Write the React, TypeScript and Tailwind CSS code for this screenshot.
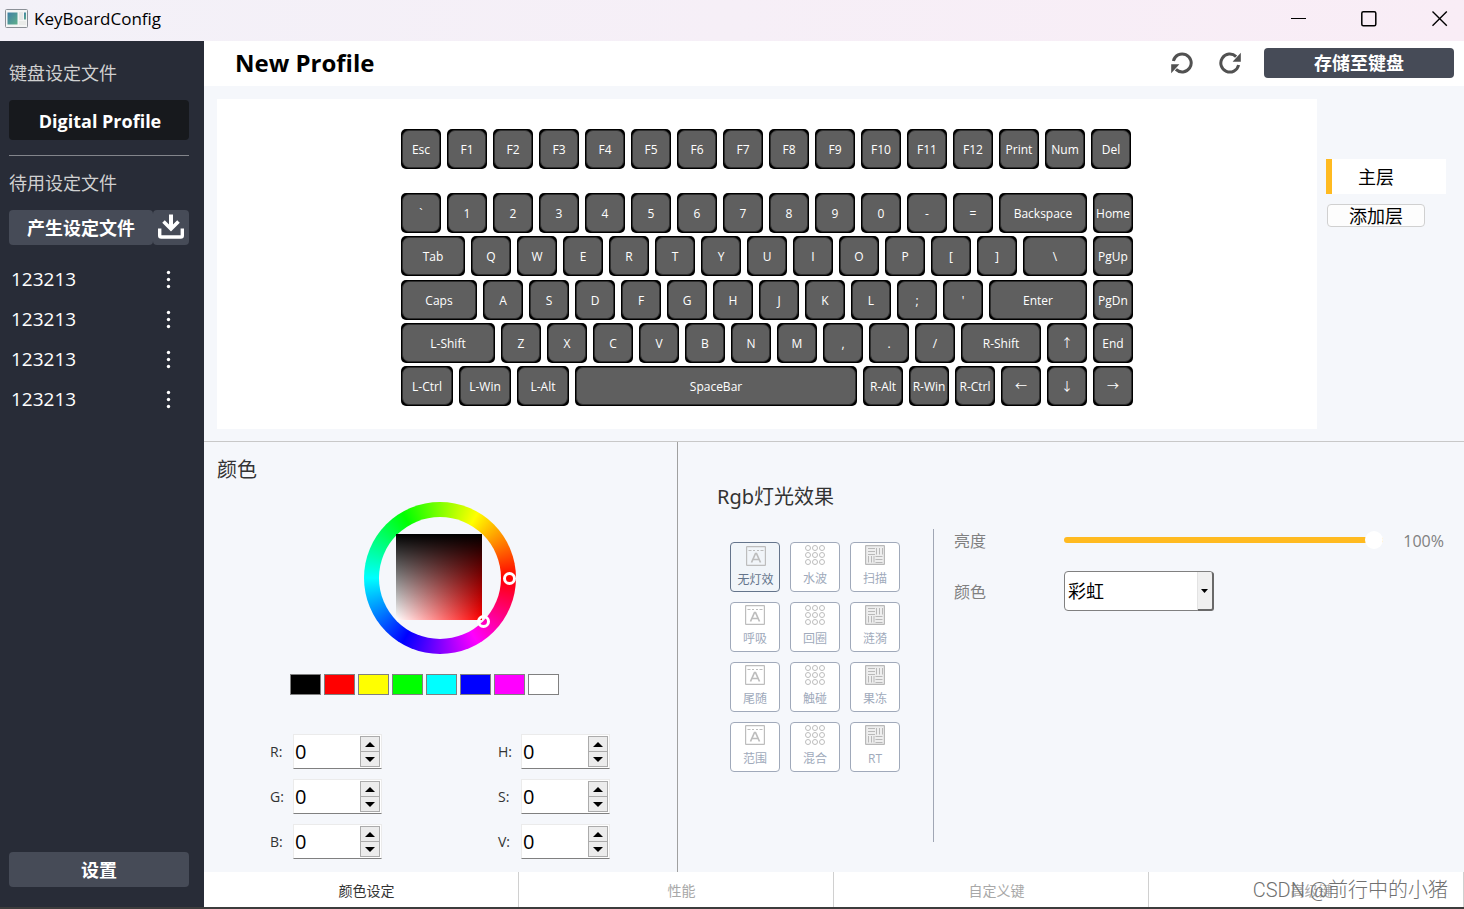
import { useState } from "react";

type KeyDef = [label: string, width?: string];

const functionRow: KeyDef[] = [
  ["Esc"], ["F1"], ["F2"], ["F3"], ["F4"], ["F5"], ["F6"], ["F7"], ["F8"], ["F9"],
  ["F10"], ["F11"], ["F12"], ["Print"], ["Num"], ["Del"],
];

const mainRows: KeyDef[][] = [
  [["`"], ["1"], ["2"], ["3"], ["4"], ["5"], ["6"], ["7"], ["8"], ["9"], ["0"], ["-"], ["="], ["Backspace", "w-[88px]"], ["Home"]],
  [["Tab", "w-16"], ["Q"], ["W"], ["E"], ["R"], ["T"], ["Y"], ["U"], ["I"], ["O"], ["P"], ["["], ["]"], ["\\", "w-16"], ["PgUp"]],
  [["Caps", "w-[76px]"], ["A"], ["S"], ["D"], ["F"], ["G"], ["H"], ["J"], ["K"], ["L"], [";"], ["'"], ["Enter", "w-[98px]"], ["PgDn"]],
  [["L-Shift", "w-[94px]"], ["Z"], ["X"], ["C"], ["V"], ["B"], ["N"], ["M"], [","], ["."], ["/"], ["R-Shift", "w-20"], ["↑"], ["End"]],
  [["L-Ctrl", "w-[52px]"], ["L-Win", "w-[52px]"], ["L-Alt", "w-[52px]"], ["SpaceBar", "w-[282px]"], ["R-Alt"], ["R-Win"], ["R-Ctrl"], ["←"], ["↓"], ["→"]],
];

const swatches = [
  ["黑", "bg-black"], ["红", "bg-[#ff0000]"], ["黄", "bg-[#ffff00]"], ["绿", "bg-[#00ff00]"],
  ["青", "bg-[#00ffff]"], ["蓝", "bg-[#0000ff]"], ["紫", "bg-[#ff00ff]"], ["白", "bg-white"],
];

const effects = ["无灯效", "水波", "扫描", "呼吸", "回圈", "涟漪", "尾随", "触碰", "果冻", "范围", "混合", "RT"];
const tabs = ["颜色设定", "性能", "自定义键", "高级键"];

function KeyRow({ keys }: { keys: KeyDef[] }) {
  return (
    <div className="flex gap-1.5">
      {keys.map(([label, width]) => (
        <button key={label} type="button" className={`h-10 shrink-0 rounded-[5px] bg-black p-px ${width ?? "w-10"}`}>
          <span className="flex h-full items-center justify-center rounded-[7px] border border-[#2e2e2e] bg-[#5f5f5f] pt-0.5 text-xs whitespace-nowrap text-white">
            {label}
          </span>
        </button>
      ))}
    </div>
  );
}

function AppIcon() {
  return (
    <svg width="23" height="19" viewBox="0 0 23 19" aria-hidden="true">
      <defs>
        <linearGradient id="pane" x1="0" y1="0" x2="1" y2="1">
          <stop offset="0" stopColor="#3f7fa6" />
          <stop offset="1" stopColor="#5fb08a" />
        </linearGradient>
      </defs>
      <rect x="0.5" y="0.5" width="22" height="18" rx="1" fill="#f4f5f5" stroke="#8b9097" />
      <rect x="2.5" y="3.5" width="10" height="12" fill="url(#pane)" />
      <rect x="14" y="3" width="4" height="8" fill="#e6e8e6" />
      <rect x="19" y="3.500" width="2" height="7" fill="url(#pane)" />
      <rect x="14" y="12" width="7" height="4" fill="#e9ebe9" />
    </svg>
  );
}

function RotateIcon({ back }: { back?: boolean }) {
  return (
    <svg width="22" height="22" viewBox="0 0 22 22" aria-hidden="true">
      <g transform={back ? "rotate(180 11 11)" : undefined}>
        <path d="M17.100 4.600A9 9 0 1 0 19.600 13" fill="none" stroke="#515151" strokeWidth="3" />
        <path d="M21.800 0.800V9.800H13.600z" fill="#515151" />
      </g>
    </svg>
  );
}

function EffectIcon({ kind }: { kind: number }) {
  if (kind === 0) {
    return (
      <svg width="20" height="20" viewBox="0 0 20 20" fill="none" stroke="#bdbdbd" aria-hidden="true">
        <rect x="0.6" y="0.6" width="18.800" height="18.800" rx="0.5" strokeWidth="1.200" />
        <path d="M2.500 4.500H5.500M7 4.500H9M11 4.500H13M14.500 4.500H17.500" />
        <path d="M5.500 16.500L9.500 7.500H10.500L14.500 16.500M7 13.500H13" strokeWidth="1.700" />
      </svg>
    );
  }
  if (kind === 1) {
    return (
      <svg width="20" height="20" viewBox="0 0 20 20" fill="none" stroke="#bdbdbd" aria-hidden="true">
        {[3, 10, 17].map((y) => [3, 10, 17].map((x) => <circle key={`${x}-${y}`} cx={x} cy={y} r="2.500" />))}
      </svg>
    );
  }
  return (
    <svg width="20" height="20" viewBox="0 0 20 20" fill="none" stroke="#b9b9b9" aria-hidden="true">
      <rect x="0.6" y="0.6" width="18.800" height="18.800" rx="0.5" fill="#eeeeee" strokeWidth="1.200" />
      <path d="M3 3.500H10M3 6.500H10M3 9.500H10M11.500 3V9.500M14.500 3V9.500M17.500 3V9.500M3.500 11V17.500M6.500 11V17.500M9 11V17.500M10.500 11.500H17.500M10.500 14.500H17.500M10.500 17.500H17.500" />
    </svg>
  );
}

function SpinField({ label }: { label: string }) {
  const [value, setValue] = useState(0);
  const id = `channel-${label}`;
  return (
    <div className="flex items-center">
      <label htmlFor={id} className="w-[23px] pt-px text-sm text-[#333]">{label}:</label>
      <div className="flex h-[35px] w-[89px] border border-[#ebebeb] border-b-[#808080] bg-white">
        <input
          id={id}
          type="number"
          value={value}
          onChange={(e) => setValue(Number(e.target.value))}
          className="min-w-0 flex-1 [appearance:textfield] bg-transparent pl-px text-xl text-black outline-none [&::-webkit-inner-spin-button]:appearance-none"
        />
        <div className="m-px flex w-5 shrink-0 flex-col divide-y divide-[#ababab] border border-[#ababab] bg-[#ececec]">
          <button type="button" aria-label={`${label} +`} onClick={() => setValue(value + 1)} className="flex flex-1 items-center justify-center">
            <svg width="10" height="5" viewBox="0 0 10 5" aria-hidden="true"><path d="M0 5L5 0L10 5z" /></svg>
          </button>
          <button type="button" aria-label={`${label} -`} onClick={() => setValue(Math.max(0, value - 1))} className="flex flex-1 items-center justify-center">
            <svg width="10" height="5" viewBox="0 0 10 5" aria-hidden="true"><path d="M0 0L5 5L10 0z" /></svg>
          </button>
        </div>
      </div>
    </div>
  );
}

function TitleBar() {
  return (
    <header className="flex h-[41px] shrink-0 items-center bg-linear-to-r from-[#f3f1f8] to-[#f9edf6] pr-4 pb-1 pl-[5px]">
      <AppIcon />
      <span className="ml-1.5 flex-1 text-[17px] text-black">KeyBoardConfig</span>
      <div className="flex gap-[54px] text-black">
        <button type="button" aria-label="最小化">
          <svg width="16" height="16" viewBox="0 0 16 16" stroke="currentColor" aria-hidden="true"><path d="M0 7.500H15" /></svg>
        </button>
        <button type="button" aria-label="最大化" className="pr-px">
          <svg width="16" height="16" viewBox="0 0 16 16" fill="none" stroke="currentColor" strokeWidth="1.500" aria-hidden="true"><rect x="0.800" y="0.800" width="14" height="14" rx="1.500" /></svg>
        </button>
        <button type="button" aria-label="关闭">
          <svg width="16" height="16" viewBox="0 0 16 16" stroke="currentColor" strokeWidth="1.400" aria-hidden="true"><path d="M0.500 0.500L14.800 14.800M14.800 0.500L0.500 14.800" /></svg>
        </button>
      </div>
    </header>
  );
}

function Sidebar() {
  return (
    <aside className="flex w-[204px] shrink-0 flex-col bg-[#282c37] pt-[18px] pr-[15px] pb-5 pl-[9px] text-lg text-white">
      <h2 className="h-7 leading-7 text-[#d0d0d0]">键盘设定文件</h2>
      <button type="button" className="mt-[13px] h-10 rounded-[4px] bg-[#17191d] pt-0.5 pl-0.5 font-bold">
        Digital Profile
      </button>
      <hr className="mt-[15px] border-[#83858b]" />
      <h2 className="mt-[13px] h-7 leading-7 text-[#d0d0d0]">待用设定文件</h2>
      <div className="mt-[13px] flex h-[35px]">
        <button type="button" className="flex-1 rounded-[4px] bg-[#464b57] font-bold">产生设定文件</button>
        <button type="button" aria-label="导入" className="flex w-9 items-center justify-center rounded-[4px] bg-[#464b57] pb-0.5">
          <svg width="26" height="25" viewBox="0 0 26 25" fill="none" stroke="#fff" aria-hidden="true">
            <path d="M13 0.500V14" strokeWidth="4" />
            <path d="M5.500 7.500L13 15L20.500 7.500" strokeWidth="3.600" />
            <path d="M1.700 14.500V21.500Q1.700 23 3.200 23H22.800Q24.300 23 24.300 21.500V14.500" strokeWidth="3.400" />
          </svg>
        </button>
      </div>
      <ul className="mt-[15px] flex-1 text-[19px]">
        {[1, 2, 3, 4].map((n) => (
          <li key={n} className="flex h-10 items-center justify-between pr-[18px] pl-0.5">
            <span>123213</span>
            <button type="button" aria-label="更多">
              <svg width="5" height="20" viewBox="0 0 5 20" fill="#fff" aria-hidden="true">
                <circle cx="2.500" cy="2.500" r="1.700" /><circle cx="2.500" cy="9.500" r="1.700" /><circle cx="2.500" cy="16.500" r="1.700" />
              </svg>
            </button>
          </li>
        ))}
      </ul>
      <button type="button" className="h-[35px] rounded-[4px] bg-[#464b57] font-bold">设置</button>
    </aside>
  );
}

function ColorPanel() {
  return (
    <section className="w-[474px] shrink-0 border-r border-[#a0a0a0] pt-[13px]">
      <h2 className="h-[30px] pl-[13px] text-xl leading-[30px] text-[#333]">颜色</h2>
      <div className="relative mt-[17px] ml-40 flex size-[152px] items-center justify-center rounded-full bg-[conic-gradient(from_90deg,#f00,#f0f,#00f,#0ff,#0f0,#ff0,#f00)]">
        <div className="flex size-[122px] items-center justify-center rounded-full bg-[#f5f7fb] pr-0.5 pb-0.5">
          <div className="size-[86px] bg-[linear-gradient(to_bottom,#000,transparent),linear-gradient(to_right,#fff,#f00)]" />
        </div>
        <span className="absolute top-[70px] left-[139px] size-[13px] rounded-full border-[3px] border-white" />
        <span className="absolute top-[113px] left-[113px] size-[13px] rounded-full border-[3px] border-white" />
      </div>
      <div className="mt-5 flex gap-[3px] pl-[86px]">
        {swatches.map(([name, color]) => (
          <button key={name} type="button" aria-label={name} className={`h-[21px] w-[31px] border border-[#808080] ${color}`} />
        ))}
      </div>
      <div className="mt-[39px] grid grid-cols-[228px_auto] gap-y-2.5 pl-[66px]">
        {["R", "H", "G", "S", "B", "V"].map((c) => <SpinField key={c} label={c} />)}
      </div>
    </section>
  );
}

function EffectPanel() {
  const [selected, setSelected] = useState(0);
  const [level, setLevel] = useState(100);
  return (
    <section className="min-w-0 flex-1 pt-10 pr-5 pl-[39px]">
      <h2 className="h-[30px] font-['Noto_Sans','Noto_Sans_CJK_SC',sans-serif] text-xl leading-[30px] text-[#333]">Rgb灯光效果</h2>
      <div className="mt-[17px] flex">
        <div className="grid h-fit grid-cols-3 gap-2.5 pt-[13px] pr-[33px] pl-[13px]">
          {effects.map((name, i) => (
            <button
              key={name}
              type="button"
              onClick={() => setSelected(i)}
              className={`flex size-[50px] flex-col items-center rounded-[4px] border text-xs ${
                i === selected ? "border-[#64748b] bg-[#f1f5f9] pt-[3px] pl-px text-[#64748b]" : "border-[#a0a9ba] bg-white pt-0.5 text-[#a0aabb]"
              }`}
            >
              <EffectIcon kind={i % 3} />
              <span className="mt-1.5 leading-4 whitespace-nowrap">{name}</span>
            </button>
          ))}
        </div>
        <div className="flex h-[313px] min-w-0 flex-1 flex-col border-l border-[#a0a6b4] pl-5 text-base text-[#808080]">
          <div className="flex h-6 items-center">
            <label htmlFor="brightness" className="w-[110px] shrink-0">亮度</label>
            <input
              id="brightness"
              type="range"
              value={level}
              onChange={(e) => setLevel(Number(e.target.value))}
              className="mb-0.5 min-w-0 flex-1 appearance-none bg-transparent [&::-webkit-slider-runnable-track]:h-1.5 [&::-webkit-slider-runnable-track]:rounded-full [&::-webkit-slider-runnable-track]:bg-[#ffba20] [&::-webkit-slider-thumb]:-mt-1.5 [&::-webkit-slider-thumb]:size-[18px] [&::-webkit-slider-thumb]:appearance-none [&::-webkit-slider-thumb]:rounded-full [&::-webkit-slider-thumb]:bg-white"
            />
            <output className="w-[61px] shrink-0 text-right">{level}%</output>
          </div>
          <div className="mt-[18px] flex h-10 items-center">
            <label htmlFor="effect-color" className="w-[110px] shrink-0 pt-0.5">颜色</label>
            <div className="relative h-10 w-[150px]">
              <select id="effect-color" className="size-full appearance-none rounded-[4px] border border-[#808080] bg-white pl-[3px] text-lg text-black">
                <option>彩虹</option>
              </select>
              <span className="pointer-events-none absolute top-px right-0 bottom-0 flex w-[17px] items-center justify-center rounded-r-[3px] border-r-2 border-b-2 border-l border-r-[#696969] border-b-[#696969] border-l-[#e3e3e3] bg-[#f0f0f0] pr-0.5">
                <svg width="7" height="4" viewBox="0 0 7 4" aria-hidden="true"><path d="M0 0H7L3.500 4z" /></svg>
              </span>
            </div>
          </div>
        </div>
      </div>
    </section>
  );
}

export default function App() {
  const [tab, setTab] = useState(0);
  return (
    <div className="flex min-h-screen flex-col bg-[#f5f7fb] font-['Open_Sans','Noto_Sans_CJK_SC',sans-serif]">
      <TitleBar />
      <div className="flex flex-1">
        <Sidebar />
        <main className="flex min-w-0 flex-1 flex-col">
          <div className="flex h-[45px] items-center bg-white pr-2.5 pb-px pl-[31px]">
            <h1 className="flex-1 text-2xl font-bold text-black">New Profile</h1>
            <button type="button" aria-label="撤销" className="mr-[26px]"><RotateIcon back /></button>
            <button type="button" aria-label="重做" className="mr-[23px]"><RotateIcon /></button>
            <button type="button" className="h-[30px] w-[190px] rounded-[4px] bg-[#464b57] text-lg leading-[30px] font-bold text-white">存储至键盘</button>
          </div>

          <div className="flex border-b border-[#c8c8c8] pt-[13px] pb-3 pl-[13px]">
            <div className="flex h-[330px] flex-1 flex-col items-center bg-white pt-[30px]">
              <div className="w-[732px]">
                <KeyRow keys={functionRow} />
                <div className="mt-6 flex h-[213px] flex-col justify-between">
                  {mainRows.map((row) => <KeyRow key={row[0][0]} keys={row} />)}
                </div>
              </div>
            </div>
            <div className="flex w-[147px] shrink-0 flex-col items-start pt-[60px] pl-[9px] text-lg text-black">
              <button type="button" className="h-[35px] w-[120px] border-l-[6px] border-[#ffba20] bg-white pt-px pr-[26px]">主层</button>
              <button type="button" className="mt-2.5 ml-px h-[23px] w-[98px] rounded-[4px] border border-[#d0d0d0] bg-[#fdfdfd] leading-[22px]">添加层</button>
            </div>
          </div>

          <div className="flex flex-1">
            <ColorPanel />
            <EffectPanel />
          </div>

          <nav className="relative flex h-[35px] shrink-0 bg-white text-sm">
            {tabs.map((name, i) => (
              <button
                key={name}
                type="button"
                onClick={() => setTab(i)}
                className={`flex-1 border-r border-[#d0d0d0] pt-0.5 pl-[11px] ${i === tab ? "text-[#333]" : "text-[#a8a8a8]"}`}
              >
                {name}
              </button>
            ))}
            <span className="pointer-events-none absolute top-1 right-4 font-[Roboto,'Noto_Sans_CJK_SC',sans-serif] text-xl leading-7 font-light whitespace-nowrap text-[#707070]">CSDN @前行中的小猪</span>
          </nav>
        </main>
      </div>
      <div className="h-0.5 shrink-0 bg-[#3c3c3c]" />
    </div>
  );
}
